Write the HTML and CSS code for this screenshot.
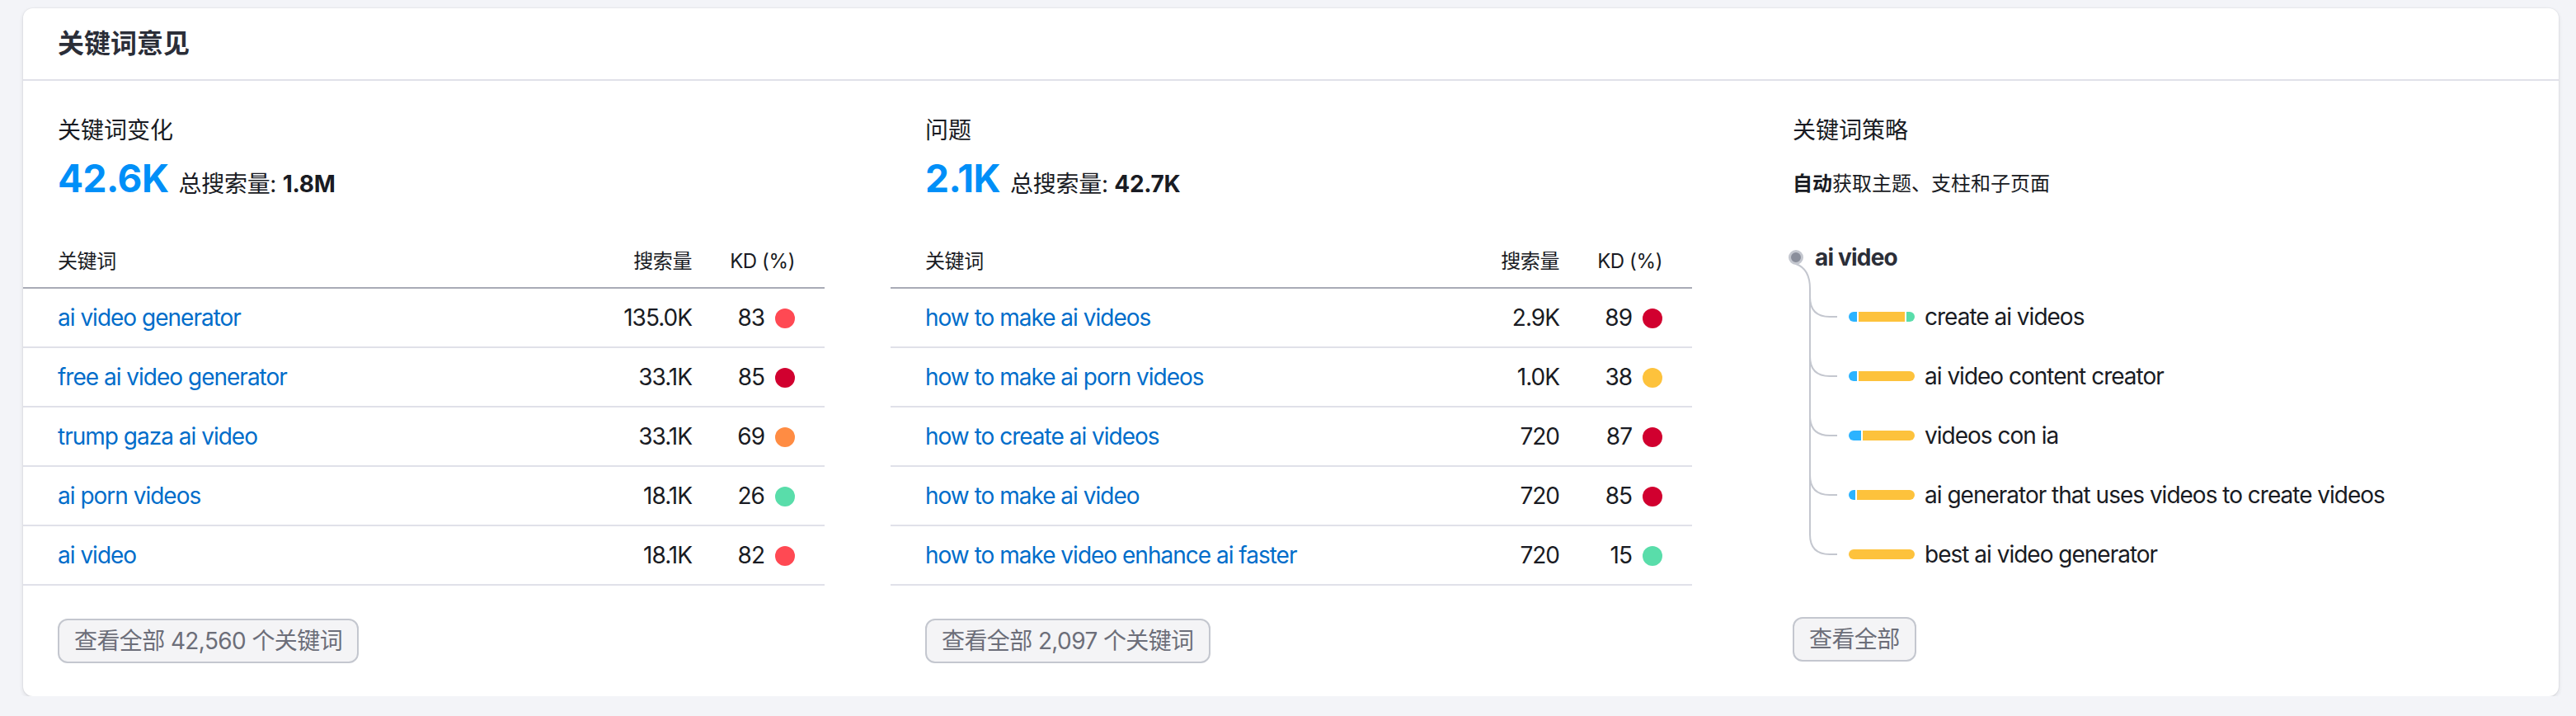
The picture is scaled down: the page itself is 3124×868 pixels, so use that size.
FILE: index.html
```html
<!DOCTYPE html>
<html lang="zh-CN">
<head>
<meta charset="utf-8">
<title>关键词意见</title>
<link rel="stylesheet" href="styles.css">
</head>
<body>
<section class="card">
  <header class="card-header">
    <h2 class="card-title">关键词意见</h2>
  </header>
  <div class="card-body">
    <div class="col">
      <div class="col-title">关键词变化</div>
      <div class="summary">
        <span class="big-num">42.6K</span>
        <span class="total">总搜索量: <b>1.8M</b></span>
      </div>
      <table class="kw-table">
        <colgroup><col class="c-kw"><col class="c-vol"><col class="c-kd"></colgroup>
        <thead>
          <tr><th class="kw">关键词</th><th class="num">搜索量</th><th class="kd">KD (%)</th></tr>
        </thead>
        <tbody>
          <tr><td class="kw"><a href="#">ai video generator</a></td><td class="num">135.0K</td><td class="kd">83<span class="dot hard"></span></td></tr>
          <tr><td class="kw"><a href="#">free ai video generator</a></td><td class="num">33.1K</td><td class="kd">85<span class="dot vhard"></span></td></tr>
          <tr><td class="kw"><a href="#">trump gaza ai video</a></td><td class="num">33.1K</td><td class="kd">69<span class="dot diff"></span></td></tr>
          <tr><td class="kw"><a href="#">ai porn videos</a></td><td class="num">18.1K</td><td class="kd">26<span class="dot easy"></span></td></tr>
          <tr><td class="kw"><a href="#">ai video</a></td><td class="num">18.1K</td><td class="kd">82<span class="dot hard"></span></td></tr>
        </tbody>
      </table>
      <button class="btn">查看全部 42,560 个关键词</button>
    </div>

    <div class="col">
      <div class="col-title">问题</div>
      <div class="summary">
        <span class="big-num">2.1K</span>
        <span class="total">总搜索量: <b>42.7K</b></span>
      </div>
      <table class="kw-table">
        <colgroup><col class="c-kw"><col class="c-vol"><col class="c-kd"></colgroup>
        <thead>
          <tr><th class="kw">关键词</th><th class="num">搜索量</th><th class="kd">KD (%)</th></tr>
        </thead>
        <tbody>
          <tr><td class="kw"><a href="#">how to make ai videos</a></td><td class="num">2.9K</td><td class="kd">89<span class="dot vhard"></span></td></tr>
          <tr><td class="kw"><a href="#">how to make ai porn videos</a></td><td class="num">1.0K</td><td class="kd">38<span class="dot poss"></span></td></tr>
          <tr><td class="kw"><a href="#">how to create ai videos</a></td><td class="num">720</td><td class="kd">87<span class="dot vhard"></span></td></tr>
          <tr><td class="kw"><a href="#">how to make ai video</a></td><td class="num">720</td><td class="kd">85<span class="dot vhard"></span></td></tr>
          <tr><td class="kw"><a href="#">how to make video enhance ai faster</a></td><td class="num">720</td><td class="kd">15<span class="dot easy"></span></td></tr>
        </tbody>
      </table>
      <button class="btn">查看全部 2,097 个关键词</button>
    </div>

    <div class="col">
      <div class="col-title">关键词策略</div>
      <div class="strategy-sub"><b>自动</b>获取主题、支柱和子页面</div>
      <div class="tree">
        <svg class="tree-lines" width="60" height="420" viewBox="0 0 60 420" aria-hidden="true">
          <g fill="none" stroke="#c4c7cf" stroke-width="2">
            <path d="M4 28 Q21 34 21 58 V356"/>
            <path d="M21 68 Q21 92 45 92 H54"/>
            <path d="M21 140 Q21 164 45 164 H54"/>
            <path d="M21 212 Q21 236 45 236 H54"/>
            <path d="M21 284 Q21 308 45 308 H54"/>
            <path d="M21 356 Q21 380 45 380 H54"/>
          </g>
          <circle cx="4" cy="20" r="7.5" fill="#8a8e9b" stroke="#c4c7cf" stroke-width="3"/>
        </svg>
        <div class="tree-root">ai video</div>
        <ul class="tree-children">
          <li class="tree-item"><span class="intent"><i class="seg blue" style="width:10px"></i><i class="seg yellow grow"></i><i class="seg green" style="width:10px"></i></span>create ai videos</li>
          <li class="tree-item"><span class="intent"><i class="seg blue" style="width:10px"></i><i class="seg yellow grow"></i></span>ai video content creator</li>
          <li class="tree-item"><span class="intent"><i class="seg blue" style="width:15px"></i><i class="seg yellow grow"></i></span>videos con ia</li>
          <li class="tree-item"><span class="intent"><i class="seg blue" style="width:8px"></i><i class="seg yellow grow"></i></span>ai generator that uses videos to create videos</li>
          <li class="tree-item"><span class="intent"><i class="seg yellow grow"></i></span>best ai video generator</li>
        </ul>
      </div>
      <button class="btn">查看全部</button>
    </div>
  </div>
</section>
</body>
</html>
```

FILE: styles.css
```css
* { box-sizing: border-box; }

html, body {
  margin: 0;
  padding: 0;
  background: #f3f4f8;
}

body {
  padding: 10px 21px 0 28px;
  font-family: Inter, "Noto Sans CJK SC", "Noto Sans", sans-serif;
  color: #191b23;
  font-size: 28px;
}

.card {
  width: 3075px;
  background: #ffffff;
  border-radius: 12px;
  box-shadow: 0 0 0 1px rgba(25, 27, 35, 0.03), 0 2px 5px rgba(25, 27, 35, 0.12);
}

.card-header {
  height: 88px;
  padding: 0 42px;
  display: flex;
  align-items: center;
  border-bottom: 2px solid #e0e1e9;
}

.card-title {
  margin: 0;
  font-size: 32px;
  font-weight: 600;
  color: #2b2e38;
  line-height: 40px;
}

.card-body {
  display: grid;
  grid-template-columns: repeat(3, 930px);
  column-gap: 122px;
  padding: 42px 0 40px 42px;
}

.col {
  display: flex;
  flex-direction: column;
  align-items: flex-start;
  min-width: 0;
}

.col-title {
  font-size: 28px;
  line-height: 36px;
  color: #191b23;
}

.summary {
  margin-top: 12px;
  display: flex;
  align-items: baseline;
  gap: 12px;
  height: 56px;
}

.big-num {
  font-size: 46px;
  line-height: 56px;
  font-weight: 700;
  color: #008ff8;
  letter-spacing: -0.5px;
}

.total {
  font-size: 28px;
  line-height: 36px;
  letter-spacing: -0.3px;
}

.total b {
  font-weight: 700;
}

.kw-table {
  margin-top: 57px;
  margin-left: -42px;
  width: 972px;
  border-collapse: collapse;
  table-layout: fixed;
}

.c-kw { width: 640px; }
.c-vol { width: 171px; }
.c-kd { width: 161px; }

.kw-table th {
  font-size: 24px;
  font-weight: 400;
  line-height: 32px;
  padding: 0 0 15px 0;
  border-bottom: 2px solid #a9abb6;
  color: #191b23;
  letter-spacing: -0.4px;
}

.kw-table td {
  height: 72px;
  padding: 0;
  border-bottom: 2px solid #e0e1e9;
  font-size: 28px;
  line-height: 36px;
  white-space: nowrap;
  letter-spacing: -1px;
}

.kw-table .kw {
  text-align: left;
  padding-left: 42px;
}

.kw-table .num {
  text-align: right;
}

.kw-table .kd {
  text-align: right;
  padding-right: 36px;
}

.kw-table a {
  color: #006dca;
  text-decoration: none;
}

.dot {
  display: inline-block;
  width: 24px;
  height: 24px;
  border-radius: 50%;
  margin-left: 13px;
  vertical-align: -3px;
}

.dot.vhard { background: #d1002f; }
.dot.hard { background: #ff4953; }
.dot.diff { background: #ff8c43; }
.dot.poss { background: #fdc23c; }
.dot.easy { background: #59ddaa; }

.btn {
  margin-top: 40px;
  height: 54px;
  padding: 0 18px;
  border: 2px solid #c4c7cf;
  border-radius: 12px;
  background: #f4f4f6;
  color: #6c6e79;
  font-family: Inter, "Noto Sans CJK SC", sans-serif;
  font-size: 28px;
  line-height: 36px;
  letter-spacing: -0.6px;
}

.strategy-sub {
  margin-top: 31px;
  font-size: 24px;
  line-height: 32px;
}

.strategy-sub b {
  font-weight: 700;
}

.tree {
  position: relative;
  margin-top: 53px;
  width: 100%;
}

.tree-lines {
  position: absolute;
  top: 0;
  left: 0;
  overflow: visible;
}

.tree-root {
  height: 40px;
  display: flex;
  align-items: center;
  padding-left: 27px;
  font-weight: 700;
  font-size: 28px;
  color: #2b2e38;
  letter-spacing: -0.8px;
}

.tree-children {
  list-style: none;
  margin: 16px 0 0 0;
  padding: 0;
}

.tree-item {
  height: 72px;
  display: flex;
  align-items: center;
  gap: 12px;
  padding-left: 68px;
  font-size: 28px;
  color: #191b23;
  letter-spacing: -1px;
}

.intent {
  display: flex;
  gap: 2px;
  width: 80px;
  height: 12px;
  border-radius: 6px;
  overflow: hidden;
  flex: none;
}

.seg {
  display: block;
  height: 100%;
  flex: none;
}

.seg.grow { flex: 1 1 auto; }
.seg.blue { background: #2bb3ff; }
.seg.yellow { background: #fdc23c; }
.seg.green { background: #59ddaa; }
```
